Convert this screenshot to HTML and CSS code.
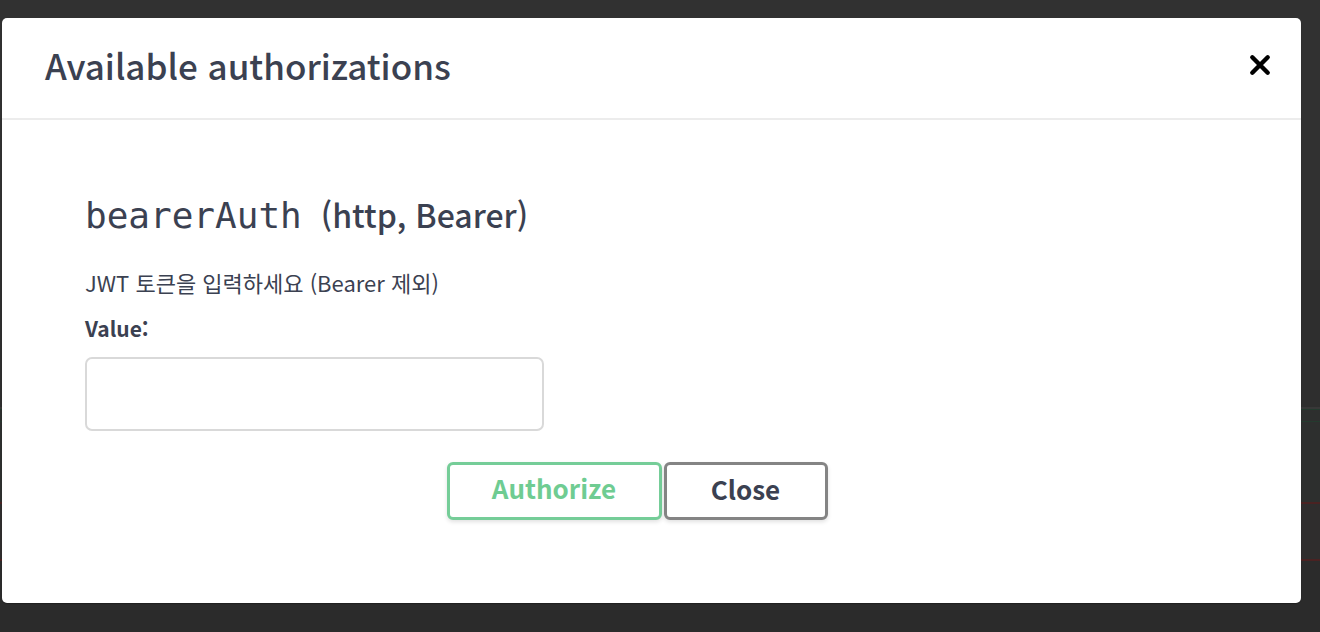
FILE: index.html
```html
<!DOCTYPE html>
<html lang="ko">
<head>
<meta charset="utf-8">
<title>Available authorizations</title>
<link rel="stylesheet" href="styles.css">
</head>
<body>
<div class="page">
  <div class="bg-top"></div>
  <div class="bg-block bg-a"></div>
  <div class="bg-block bg-b"></div>
  <div class="bg-block bg-c"></div>
  <div class="bg-block bg-d"></div>
</div>
<div class="modal" role="dialog">
  <div class="modal-header">
    <h3 class="modal-title">Available authorizations</h3>
    <button class="close-x" aria-label="Close">
      <svg width="22" height="22" viewBox="0 0 20 20"><path d="M3 3 L17 17 M17 3 L3 17" stroke="#000" stroke-width="4" stroke-linecap="round"/></svg>
    </button>
  </div>
  <div class="modal-body">
    <h4 class="auth-title"><code class="auth-name">bearerAuth</code><span class="auth-type">(http, Bearer)</span></h4>
    <p class="auth-desc">JWT 토큰을 입력하세요 (Bearer 제외)</p>
    <label class="auth-label">Value:</label>
    <input class="auth-input" type="text">
    <div class="btn-row">
      <button class="btn btn-authorize">Authorize</button>
      <button class="btn btn-close">Close</button>
    </div>
  </div>
</div>
</body>
</html>
```

FILE: styles.css
```css
html, body {
  margin: 0;
  padding: 0;
}
body {
  width: 1320px;
  height: 632px;
  overflow: hidden;
  background: #2b2b2b;
  font-family: "Noto Sans CJK KR", "Noto Sans", sans-serif;
  color: #3b4151;
}
.page {
  display: flex;
  flex-direction: column;
}
.bg-top {
  height: 270px;
  background: #313131;
}
.bg-block {
  width: 100%;
}
.bg-a {
  height: 137px;
  background: #2e2e2e;
  border-bottom: 2px solid #383838;
}
.bg-b {
  height: 11px;
  background: #2d2f2e;
  border-top: 1px solid #243a2e;
}
.bg-c {
  height: 80px;
  background: #2d2f2e;
  border-top: 1px solid #243a2e;
}
.bg-d {
  height: 55px;
  background: #2f2d2d;
  border-top: 2px solid #4a2222;
  border-bottom: 2px solid #4a2222;
}

.modal {
  position: absolute;
  left: 2px;
  top: 18px;
  width: 1299px;
  height: 585px;
  background: #fff;
  border-radius: 5px;
  box-shadow: 0 1px 1px rgba(0,0,0,0.25);
  display: flex;
  flex-direction: column;
}
.modal-header {
  height: 100px;
  border-bottom: 2px solid #ececec;
  display: flex;
  align-items: center;
  justify-content: space-between;
  padding: 0 30px 0 43px;
}
.modal-title {
  margin: 0 0 7px;
  font-size: 35px;
  font-weight: 500;
  color: #3b4151;
}
.close-x {
  background: none;
  border: 0;
  padding: 0;
  margin-bottom: 6px;
  display: flex;
}
.modal-body {
  padding: 72px 0 0 83px;
  display: flex;
  flex-direction: column;
  align-items: flex-start;
}
.auth-title {
  margin: 0;
  line-height: 44px;
  display: flex;
  align-items: baseline;
}
.auth-name {
  font-family: "DejaVu Sans Mono", monospace;
  font-size: 36px;
  font-weight: 400;
  color: #3b4151;
}
.auth-type {
  margin-left: 19px;
  font-size: 32px;
  font-weight: 500;
}
.auth-desc {
  margin: 30px 0 0;
  font-size: 22px;
  line-height: 28px;
}
.auth-label {
  margin-top: 18px;
  font-size: 21px;
  font-weight: 700;
  line-height: 28px;
}
.auth-input {
  margin-top: 15px;
  width: 459px;
  height: 74px;
  box-sizing: border-box;
  border: 2px solid #d9d9d9;
  border-radius: 7px;
  background: #fff;
}
.btn-row {
  align-self: stretch;
  display: flex;
  justify-content: center;
  gap: 2px;
  margin-top: 31px;
  padding-right: 112px;
}
.btn {
  height: 58px;
  box-sizing: border-box;
  border-radius: 6px;
  background: #fff;
  padding: 0 0 8px;
  font-family: "Noto Sans CJK KR", "Noto Sans", sans-serif;
  font-size: 26px;
  font-weight: 700;
  box-shadow: 0 2px 4px rgba(0,0,0,0.12);
}
.btn-authorize {
  width: 215px;
  border: 3px solid #75cd98;
  color: #6fcc92;
}
.btn-close {
  width: 164px;
  border: 3px solid #848484;
  color: #3b4151;
  padding-bottom: 5px;
}
```
